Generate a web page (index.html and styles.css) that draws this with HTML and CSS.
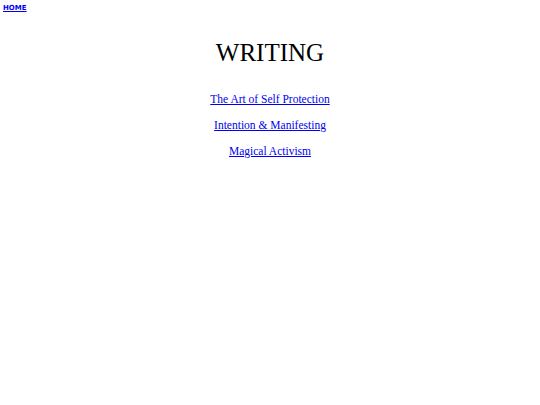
FILE: index.html
```html
<!DOCTYPE html>
<html>
<head>
<meta charset="utf-8">
<link rel="stylesheet" href="styles.css">
</head>
<body>
<nav class="nav"><a class="home" href="#">HOME</a></nav>
<main class="main">
<h1 class="title">WRITING</h1>
<ul class="list">
<li><a href="#">The Art of Self Protection</a></li>
<li><a href="#">Intention &amp; Manifesting</a></li>
<li><a href="#">Magical Activism</a></li>
</ul>
</main>
</body>
</html>
```
FILE: styles.css
```css
html, body { margin: 0; padding: 0; background: #fff; }
body { font-family: "Liberation Serif", "Times New Roman", serif; color: #000; }
.nav { padding: 4px 3px 0; height: 10px; font-size: 7px; line-height: 8px; }
.home { font-family: "DejaVu Sans", Verdana, sans-serif; font-weight: bold; font-size: 7px; color: #0000ee; }
.main { text-align: center; }
.title { font-weight: normal; font-size: 25px; margin: 24px 0 0; line-height: 30px; }
.list { list-style: none; margin: 24px 0 0; padding: 0; display: flex; flex-direction: column; gap: 12px; }
.list li { font-size: 11.5px; line-height: 14px; }
.list a { color: #0000ee; }
```
